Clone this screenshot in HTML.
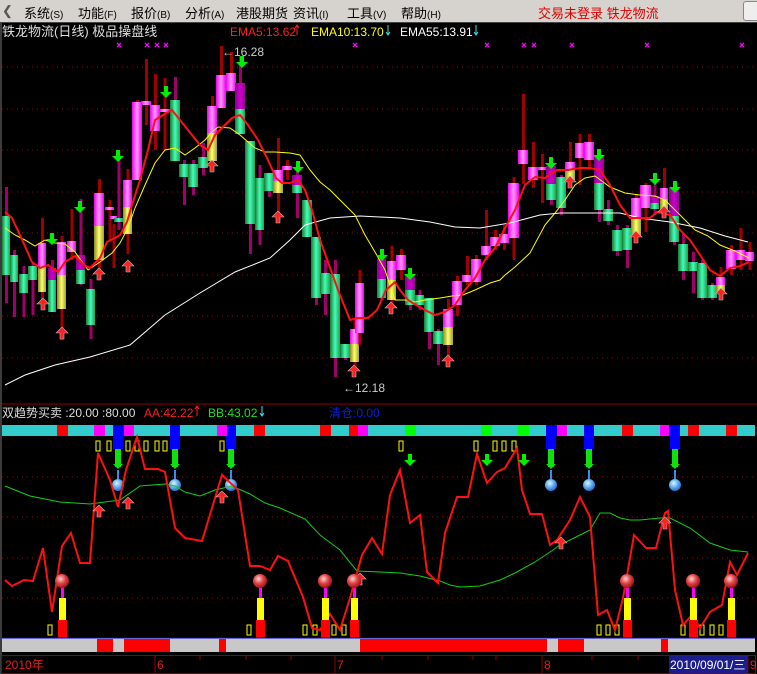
<!DOCTYPE html>
<html><head><meta charset="utf-8">
<style>
html,body{margin:0;padding:0;background:#000;width:757px;height:674px;overflow:hidden}
body{position:relative;font-family:"Liberation Sans","Noto Sans CJK SC",sans-serif}
#menu{position:absolute;left:0;top:0;width:757px;height:22px;background:#d6d3ce;border-bottom:1px solid #444}
#menu span{position:absolute;top:3px;font-size:13px;color:#000}
#menu span i{position:static;font-style:normal;font-size:10px}
svg{position:absolute;left:0;top:0}
</style></head><body>
<div id="menu">
<span style="left:2px;color:#555">&#10094;</span>
<span style="left:24px">系统<i>(S)</i></span>
<span style="left:78px">功能<i>(F)</i></span>
<span style="left:131px">报价<i>(B)</i></span>
<span style="left:185px">分析<i>(A)</i></span>
<span style="left:236px">港股期货</span>
<span style="left:293px">资讯<i>(I)</i></span>
<span style="left:347px">工具<i>(V)</i></span>
<span style="left:401px">帮助<i>(H)</i></span>
<span style="left:538px;color:#e00000">交易未登录 铁龙物流</span>
<span style="left:743px;top:1px;width:20px;height:18px;border:1px solid #888;border-radius:3px;background:#eee"></span>
</div>
<svg id="s" width="757" height="674" xmlns="http://www.w3.org/2000/svg" font-family="Liberation Sans, Noto Sans CJK SC, sans-serif">
<defs>
<linearGradient id="gc"><stop offset="0" stop-color="#1d7a30"/><stop offset=".5" stop-color="#40ffb8"/><stop offset="1" stop-color="#22a050"/></linearGradient>
<linearGradient id="gm"><stop offset="0" stop-color="#ee00ee"/><stop offset=".5" stop-color="#ff99ff"/><stop offset="1" stop-color="#ee00ee"/></linearGradient>
<linearGradient id="gy"><stop offset="0" stop-color="#8a8a20"/><stop offset=".5" stop-color="#ffff70"/><stop offset="1" stop-color="#a0a030"/></linearGradient>
<linearGradient id="gp"><stop offset="0" stop-color="#880088"/><stop offset=".5" stop-color="#cc00cc"/><stop offset="1" stop-color="#990099"/></linearGradient>
<radialGradient id="bb" cx=".4" cy=".35" r=".7"><stop offset="0" stop-color="#e0f4ff"/><stop offset=".5" stop-color="#60b0f0"/><stop offset="1" stop-color="#2060c0"/></radialGradient>
<radialGradient id="rb" cx=".4" cy=".35" r=".7"><stop offset="0" stop-color="#ffd0d0"/><stop offset=".5" stop-color="#e04040"/><stop offset="1" stop-color="#901010"/></radialGradient>
</defs>
<line x1="1" y1="23" x2="1" y2="674" stroke="#777"/>
<text x="2" y="36" fill="#ddd" font-size="13">铁龙物流(日线) 极品操盘线</text>
<text x="230" y="36" fill="#ff2020" font-size="12">EMA5:13.62</text>
<text x="311" y="36" fill="#ffff00" font-size="12">EMA10:13.70</text>
<text x="400" y="36" fill="#fff" font-size="12">EMA55:13.91</text>
<g id="g"></g>
</svg>
<script>
const g=document.getElementById('g');const NS="http://www.w3.org/2000/svg";
function el(t,a,txt){const e=document.createElementNS(NS,t);for(const k in a)e.setAttribute(k,a[k]);if(txt)e.textContent=txt;g.appendChild(e);return e;}
function R(x,y,w,h,f){el('rect',{x,y,width:w,height:h,fill:f});}
function up(x,y,c){el('path',{d:`M${x} ${y} l-6 6 h4 v6 h4 v-6 h4 z`,fill:c||'#ff2020',stroke:'#bbb','stroke-width':.6});}
function dn(x,y,c){el('path',{d:`M${x} ${y} l-6 -6 h4 v-6 h4 v6 h4 z`,fill:c||'#00ee00'});}
el('path',{d:'M297 35 v-10 m-2 3 l2 -3 l2 3',stroke:'#ff2020',fill:'none'});
el('path',{d:'M388 25 v10 m-2 -3 l2 3 l2 -3',stroke:'#40e0f0',fill:'none'});
el('path',{d:'M476 25 v10 m-2 -3 l2 3 l2 -3',stroke:'#40e0f0',fill:'none'});
[67,109,150,192,233,275,316,358].forEach(y=>el('line',{x1:2,y1:y,x2:757,y2:y,stroke:'#a00000','stroke-dasharray':'1 4'}));
[119,147,157,166,355,487,524,534,572,647,742].forEach(x=>el('path',{d:`M${x-2} 43 l4 4 m0 -4 l-4 4`,stroke:'#ff00ff','stroke-width':1.3}));
const C=[[2,11,'c',216,275,0,187,303],[10,19,'c',255,282,0,250,317],[19,29,'c',274,293,0,266,317],[28,38,'c',266,280,0,262,315],[38,47,'my',243,267,292,218,300],[48,57,'pc',268,280,312,260,312],[57,67,'my',242,275,309,236,340],[67,77,'m',241,252,0,209,260],[76,86,'pc',255,270,284,199,285],[86,96,'c',289,325,0,279,339],[94,105,'my',193,226,260,179,270],[105,115,'m',207,209,0,200,240],[110,118,'m',216,219,0,224,268],[114,124,'c',218,222,0,150,230],[123,133,'my',180,207,234,169,254],[132,143,'m',102,180,0,100,180],[141,152,'m',101,105,0,59,125],[150,161,'m',105,131,0,74,150],[159,171,'m',109,111,0,78,150],[170,181,'c',100,161,0,77,161],[179,190,'c',164,177,0,160,205],[188,199,'c',164,187,0,160,195],[198,209,'c',157,168,0,143,175],[207,218,'my',106,133,161,96,170],[216,227,'m',75,108,0,46,108],[226,237,'m',73,91,0,52,91],[235,246,'pc',83,109,134,56,134],[245,256,'c',141,224,0,141,254],[255,265,'c',178,230,0,165,245],[264,275,'c',173,191,0,173,197],[273,284,'my',170,181,193,138,216],[282,293,'m',166,170,0,160,180],[292,303,'pc',175,185,193,170,218],[302,313,'c',200,237,0,200,237],[311,322,'c',237,298,0,237,305],[320,331,'c',273,294,0,260,315],[330,341,'c',274,358,0,260,377],[340,351,'c',344,358,0,344,360],[350,360,'my',329,344,362,318,370],[355,365,'m',283,333,0,270,345],[377,387,'pc',259,279,298,255,300],[387,397,'my',261,280,300,246,305],[396,407,'m',255,270,0,249,280],[405,416,'pc',275,290,305,270,310],[415,425,'c',295,305,0,290,310],[424,435,'c',298,332,0,298,349],[433,444,'c',331,344,0,329,365],[443,454,'my',309,327,345,299,360],[452,463,'m',281,305,0,276,316],[462,473,'m',275,282,0,256,285],[471,482,'m',259,282,0,255,285],[481,492,'m',246,255,0,210,260],[490,501,'m',237,246,0,230,250],[499,510,'m',234,243,0,225,250],[508,520,'m',183,238,0,177,260],[518,529,'m',150,164,0,94,184],[528,539,'m',167,180,0,142,188],[538,547,'m',167,170,0,154,203],[546,557,'pc',166,184,200,160,205],[556,567,'c',177,208,0,175,215],[565,576,'my',162,170,180,142,185],[575,585,'m',143,158,0,134,185],[584,595,'m',142,160,0,134,170],[594,605,'pc',155,183,210,150,222],[603,614,'c',209,221,0,200,225],[612,623,'c',230,251,0,225,256],[622,633,'c',228,250,0,225,268],[631,642,'my',198,217,237,194,240],[640,652,'m',185,208,0,183,232],[650,660,'pc',196,203,209,181,215],[660,669,'my',188,199,212,168,215],[669,680,'pc',188,216,242,185,245],[678,689,'c',244,271,0,234,280],[688,699,'c',262,271,0,252,293],[697,708,'c',263,298,0,260,300],[707,718,'c',285,298,0,283,300],[716,726,'my',277,285,292,267,295],[726,737,'m',250,269,0,245,275],[736,746,'m',250,260,0,228,270],[745,755,'m',252,261,0,242,270]];
C.forEach(([a,b,t,p,q,r,wt,wb])=>{const cx=(a+b)/2;const wc=(t=='c'||t=='pc')?'#a0006a':'#a00000';
R(cx-1.5,wt,3,wb-wt,wc);
const w=b-a-1;
if(t=='c')R(a,p,w,q-p,'url(#gc)');
else if(t=='m')R(a,p,w,Math.max(3,q-p),'url(#gm)');
else if(t=='my'){R(a,p,w,q-p,'url(#gm)');R(a,q,w,r-q,'url(#gy)');}
else if(t=='pc'){R(a,p,w,q-p,'url(#gp)');R(a,q,w,r-q,'url(#gc)');}});
function pl(pts,c,w){el('polyline',{points:pts.map(p=>p.join(',')).join(' '),fill:'none',stroke:c,'stroke-width':w});}
pl([[5,385],[25,375],[55,365],[90,357],[130,345],[165,315],[200,293],[235,272],[270,258],[290,240],[305,225],[330,218],[360,216],[400,218],[430,222],[455,227],[480,228],[510,223],[540,215],[560,213],[590,213],[620,213],[640,218],[670,222],[700,228],[725,236],[748,242]],'#fff',1);
pl([[5,228],[15,235],[25,240],[35,246],[45,240],[55,243],[65,244],[75,252],[88,270],[100,262],[112,253],[120,243],[128,228],[135,208],[145,185],[155,163],[165,150],[175,148],[185,155],[195,148],[205,140],[212,132],[218,127],[230,128],[240,135],[255,148],[265,152],[275,152],[290,153],[300,155],[310,170],[320,182],[330,190],[340,200],[355,215],[365,235],[375,252],[385,270],[395,300],[405,300],[415,302],[425,300],[440,298],[452,296],[463,295],[475,290],[490,283],[500,280],[505,275],[515,267],[530,253],[545,225],[555,213],[565,200],[575,185],[585,178],[595,176],[610,187],[625,193],[640,195],[655,196],[665,200],[680,215],[695,230],[708,236],[720,245],[735,251],[749,258]],'#ffff00',1);
pl([[5,212],[12,218],[20,235],[32,262],[40,268],[48,265],[58,272],[65,262],[75,256],[84,265],[90,268],[100,258],[107,242],[115,238],[120,235],[127,222],[132,205],[140,180],[148,150],[155,120],[163,115],[172,110],[180,120],[192,135],[200,145],[208,150],[215,135],[225,125],[232,118],[240,115],[248,125],[258,140],[268,160],[276,178],[282,183],[290,183],[298,180],[305,190],[312,210],[320,240],[328,262],[338,290],[350,320],[358,318],[368,318],[377,310],[386,290],[395,282],[400,290],[408,300],[416,305],[425,310],[435,315],[445,312],[455,305],[465,290],[475,278],[485,260],[495,248],[505,228],[515,210],[525,185],[535,177],[545,178],[557,170],[568,170],[580,168],[590,168],[600,170],[610,185],[620,205],[630,218],[640,218],[650,218],[657,212],[670,215],[680,230],[690,240],[700,255],[710,270],[720,276],[730,268],[740,266],[749,262]],'#ff1010',2);
[[52,245],[80,213],[118,162],[166,98],[242,68],[298,173],[382,261],[410,280],[551,169],[599,161],[655,185],[675,193]].forEach(p=>dn(p[0],p[1]));
[[43,298],[62,327],[99,268],[128,260],[212,160],[278,211],[354,365],[391,302],[448,355],[570,176],[636,231],[664,206],[721,288]].forEach(p=>up(p[0],p[1]));
el('text',{x:222,y:56,fill:'#ccc','font-size':12},'←16.28');
el('text',{x:343,y:392,fill:'#ccc','font-size':12},'←12.18');
el('line',{x1:2,y1:404,x2:757,y2:404,stroke:'#900000'});
el('text',{x:2,y:417,fill:'#ddd','font-size':12},'双趋势买卖 :20.00 :80.00');
el('text',{x:144,y:417,fill:'#ff2020','font-size':12},'AA:42.22');
el('path',{d:'M197 416 v-10 m-2 3 l2 -3 l2 3',stroke:'#ff2020',fill:'none'});
el('text',{x:208,y:417,fill:'#20e020','font-size':12},'BB:43.02');
el('path',{d:'M262 406 v10 m-2 -3 l2 3 l2 -3',stroke:'#40e0f0',fill:'none'});
el('text',{x:329,y:417,fill:'#0020e0','font-size':12},'清仓:0.00');
const segs=[[2,57,'#33cccc'],[57,68,'#f00'],[68,94,'#33cccc'],[94,105,'#f0f'],[105,113,'#33cccc'],[113,124,'#00f'],[124,134,'#f0f'],[134,170,'#33cccc'],[170,180,'#00f'],[180,217,'#33cccc'],[217,227,'#f0f'],[227,236,'#00f'],[236,254,'#33cccc'],[254,265,'#f00'],[265,320,'#33cccc'],[320,331,'#f00'],[331,349,'#33cccc'],[349,358,'#f00'],[358,368,'#f0f'],[368,405,'#33cccc'],[405,416,'#0f0'],[416,481,'#33cccc'],[481,492,'#0f0'],[492,518,'#33cccc'],[518,529,'#0f0'],[529,546,'#33cccc'],[546,557,'#00f'],[557,567,'#f0f'],[567,584,'#33cccc'],[584,594,'#00f'],[594,622,'#33cccc'],[622,633,'#f00'],[633,660,'#33cccc'],[660,669,'#f0f'],[669,680,'#00f'],[680,688,'#33cccc'],[688,699,'#f00'],[699,726,'#33cccc'],[726,737,'#f00'],[737,755,'#33cccc']];
segs.forEach(s=>R(s[0],425,s[1]-s[0],11,s[2]));
[477,517,558,598].forEach(y=>el('line',{x1:2,y1:y,x2:757,y2:y,stroke:'#b00000','stroke-dasharray':'1 4'}));
[118,175,231,551,589,675].forEach(x=>{R(x-5,436,10,13,'#00f');R(x-3,449,6,18,'#10e010');el('path',{d:`M${x-5} 464 l5 5 l5 -5z`,fill:'#10e010'});R(x-1,470,2,9,'#3090f0');el('circle',{cx:x,cy:485,r:6,fill:'url(#bb)'});});
function yr(x,y){el('rect',{x:x-2,y,width:4,height:10,fill:'none',stroke:'#ff0','stroke-width':1});}
[98,109,128,137,146,157,165,222,401,476,495,504,514].forEach(x=>yr(x,441));
[50,249,305,315,334,344,599,608,617,683,702,712,721].forEach(x=>yr(x,625));
pl([[5,486],[30,496],[60,502],[90,504],[105,502],[120,500],[140,486],[165,484],[175,486],[185,492],[200,496],[215,490],[232,486],[250,494],[265,503],[280,508],[305,519],[320,535],[340,550],[357,571],[380,572],[400,573],[420,576],[440,581],[450,585],[460,587],[480,586],[500,580],[515,573],[535,562],[550,552],[560,545],[580,535],[590,530],[600,513],[610,513],[620,518],[630,520],[640,520],[660,518],[670,518],[690,528],[710,543],[730,550],[748,552]],'#10d010',1);
pl([[5,580],[12,586],[24,580],[33,581],[43,548],[52,612],[62,546],[71,533],[80,563],[90,563],[98,453],[110,480],[118,507],[126,470],[137,437],[145,469],[158,469],[165,472],[175,528],[185,538],[202,541],[222,475],[238,490],[250,566],[260,566],[270,570],[278,556],[288,561],[303,597],[312,628],[320,630],[330,614],[340,630],[350,598],[362,555],[372,538],[382,554],[390,495],[400,470],[410,523],[420,515],[427,572],[438,583],[445,533],[457,497],[468,497],[477,454],[487,483],[497,472],[505,468],[517,448],[522,490],[530,514],[542,514],[550,545],[557,540],[570,520],[580,497],[590,517],[598,615],[607,610],[615,630],[623,598],[634,535],[646,548],[656,548],[665,513],[668,511],[675,590],[683,625],[692,615],[700,628],[710,612],[722,605],[730,562],[737,575],[748,553]],'#ff1010',2);
[[410,466],[487,466],[524,466]].forEach(p=>dn(p[0],p[1]));
[[99,505],[128,497],[222,491],[561,537],[665,517],[360,573]].forEach(p=>up(p[0],p[1]));
[62,260,325,354,627,693,731].forEach(x=>{R(x-4,620,9,18,'#f00');R(x-3,598,7,22,'#ff0');R(x-1,587,3,11,'#f0f');el('circle',{cx:x,cy:581,r:7,fill:'url(#rb)'});});
R(2,638,753,14,'#c8c8c8');
[[97,113],[124,170],[219,226],[360,547],[558,584],[661,668]].forEach(s=>R(s[0],639,s[1]-s[0],13,'#f00'));
el('line',{x1:2,y1:638,x2:755,y2:638,stroke:'#0000e0'});
el('rect',{x:1.5,y:655.5,width:754,height:18,fill:'none',stroke:'#900000'});
[155,335,542,748].forEach(x=>el('line',{x1:x,y1:656,x2:x,y2:674,stroke:'#900000'}));
[200,246,291,382,428,473,496,592,638,688,713].forEach(x=>el('line',{x1:x,y1:656,x2:x,y2:660,stroke:'#900000'}));
el('text',{x:5,y:669,fill:'#e02020','font-size':12},'2010年');
el('text',{x:157,y:669,fill:'#e02020','font-size':12},'6');
el('text',{x:337,y:669,fill:'#e02020','font-size':12},'7');
el('text',{x:544,y:669,fill:'#e02020','font-size':12},'8');
R(669,656,79,17,'#1c1c8c');
el('text',{x:670,y:669,fill:'#fff','font-size':12},'2010/09/01/三');
el('text',{x:750,y:669,fill:'#e02020','font-size':12},'9');
</script>
</body></html>
